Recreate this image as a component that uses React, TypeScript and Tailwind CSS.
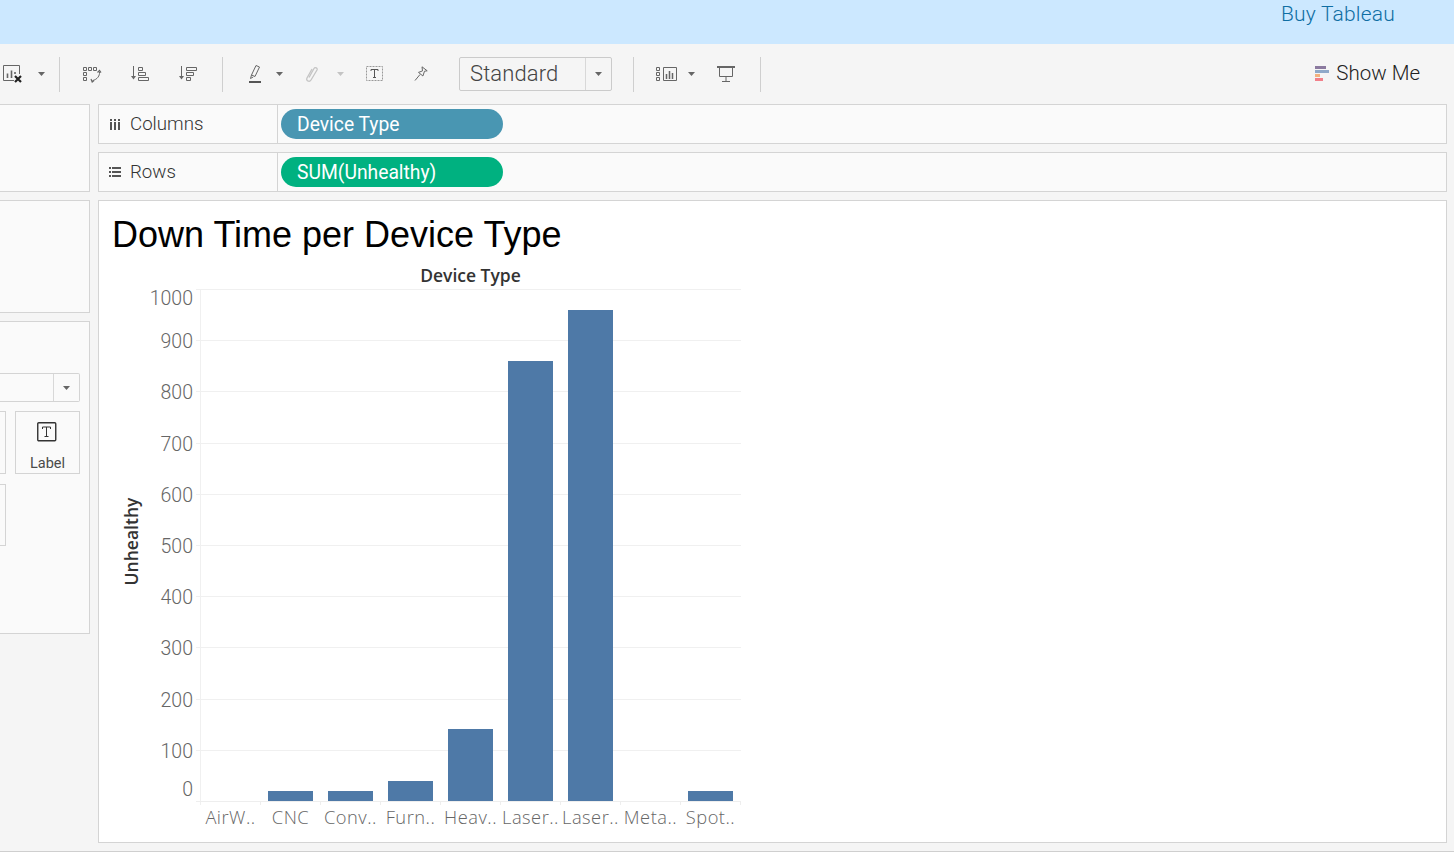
import React from 'react';

const uiFont = 'font-["Roboto","Liberation_Sans",sans-serif]';

const Caret = ({ light, className = '' }: { light?: boolean; className?: string }) => (
  <svg width="7" height="4" viewBox="0 0 7 4" className={className}>
    <path d="M0 0h7L3.5 4z" fill={light ? '#c4c4c4' : '#666'} />
  </svg>
);

const Sep = ({ className = '' }: { className?: string }) => <div className={`h-[35px] w-px bg-[#cfcfcf] ${className}`} />;

const Toolbar = () => (
  <div className="flex h-[60px] items-center bg-[#f5f5f5]">
    <svg width="22" height="20" viewBox="0 0 22 20" className="ml-[2px]" fill="none" stroke="#666">
      <path d="M12 16.500H1.500V1.500h16V10" />
      <path d="M5.500 14V9.500M9.500 14V6.500M13 10V8" strokeWidth="1.600" />
      <path d="M13 12l6 6M19 12l-6 6" stroke="#222" strokeWidth="2.200" />
    </svg>
    <Caret className="ml-[14px]" />
    <Sep className="ml-[14px]" />
    <svg width="20" height="20" viewBox="0 0 20 20" className="ml-[22px]" fill="none" stroke="#666">
      <path d="M1.500 3.500h3v3h-3zM6.500 3.500h3v3h-3zM11.500 3.500h3v3h-3zM1.500 8.500h3v3h-3zM1.500 13.500h3v3h-3z" />
      <path d="M17.500 8c.4 3.800-2.200 7.400-7 8.600" />
      <path d="M15.500 8.500l2-2 1.500 2.200M9 15l1.200 3 1.800-1.500" strokeWidth="1.200" />
    </svg>
    <svg width="20" height="20" viewBox="0 0 20 20" className="ml-[28px]" fill="none" stroke="#666">
      <path d="M3.500 2v11" />
      <path d="M1 12h5l-2.500 3.500z" fill="#666" stroke="none" />
      <path d="M8.500 3.500h4v3h-4zM8.500 8.500h7v3h-7zM8.500 13.500h10v3h-10z" />
    </svg>
    <svg width="20" height="20" viewBox="0 0 20 20" className="ml-[28px]" fill="none" stroke="#666">
      <path d="M3.500 2v11" />
      <path d="M1 12h5l-2.500 3.500z" fill="#666" stroke="none" />
      <path d="M8.500 3.500h10v3h-10zM8.500 8.500h7v3h-7zM8.500 13.500h4v3h-4z" />
    </svg>
    <Sep className="ml-[24px]" />
    <svg width="16" height="20" viewBox="0 0 16 20" className="ml-[24px]" fill="none" stroke="#666">
      <path d="M9 1.500l3.500 1.500-4.500 9.500-3.500-1.500zM4.500 11L3.500 14.500l2.700-1.500" />
      <path d="M2 18h12" stroke="#555" strokeWidth="2" />
    </svg>
    <Caret className="ml-[13px]" />
    <svg width="14" height="18" viewBox="0 0 14 18" className="ml-[22px]" fill="none" stroke="#c4c4c4" strokeWidth="1.300">
      <path d="M4 12.500L9 3.500c1-1.800 4-.4 3 1.500L6 15c-1.500 2.500-5.500.8-4-2l5-9" />
    </svg>
    <Caret light className="ml-[18px]" />
    <svg width="18" height="16" viewBox="0 0 18 16" className="ml-[22px]" fill="none">
      <rect x="0.500" y="0.500" width="16" height="14" stroke="#999" strokeDasharray="2 1" />
      <path d="M5 5V3.500h7V5M8.500 3.500v8M7 11.500h3" stroke="#555" />
    </svg>
    <svg width="14" height="16" viewBox="0 0 14 16" className="ml-[30px]" fill="none" stroke="#666">
      <path d="M8 .8l5.200 4-2.700.4-1.600 4.800-4.400-3.600 4-1.500zM6 8.500L1 14.500" />
    </svg>
    <div className="ml-[31px] flex h-[34px] w-[153px] items-center rounded-[2px] border border-[#cbcbcb]">
      <span className={`flex-1 pl-[10px] text-[22px] font-light leading-none tracking-[0.1px] text-[#444] ${uiFont}`}>Standard</span>
      <div className="flex h-full w-[26px] items-center justify-center border-l border-[#d8d8d8]">
        <Caret />
      </div>
    </div>
    <Sep className="ml-[21px]" />
    <svg width="22" height="16" viewBox="0 0 22 16" className="ml-[22px]" fill="none" stroke="#666">
      <path d="M.5 1.500h3v3h-3zM.5 6.500h3v3h-3zM.5 11.500h3v3h-3zM7.500 1.500h13v13h-13z" />
      <path d="M10.500 13V8M13.500 13V5M16.500 13V7" strokeWidth="1.500" />
    </svg>
    <Caret className="ml-[10px]" />
    <svg width="18" height="18" viewBox="0 0 18 18" className="ml-[22px]" fill="none" stroke="#666">
      <path d="M0 2h18" strokeWidth="2" />
      <path d="M2.500 3v8.500h13V3M9 11.500V16M5 16.500h8" />
    </svg>
    <Sep className="ml-[25px]" />
    <div className="ml-auto mr-[34px] mb-[2px] flex items-center gap-[7px]">
      <div className="flex w-[14px] flex-col gap-px">
        <div className="h-[3px] w-[11px] bg-[#8b7a9f]" />
        <div className="h-[3px] w-[14px] bg-[#8fa9c9]" />
        <div className="h-[3px] w-[5px] bg-[#f2b27f]" />
        <div className="h-[3px] w-[8px] bg-[#f2808a]" />
      </div>
      <span className={`text-[20.500px] font-light leading-none text-[#222] ${uiFont}`}>Show Me</span>
    </div>
  </div>
);

const Shelf = ({ label, pill, color, icon }: { label: string; pill: string; color: string; icon: React.ReactNode }) => (
  <div className="flex h-[40px] border border-[#d4d4d4] bg-[#fafafa]">
    <div className="flex w-[179px] items-center border-r border-[#d4d4d4]">
      <div className="flex w-[31px] justify-center">{icon}</div>
      <span className={`text-[18.700px] font-light text-[#333] ${uiFont}`}>{label}</span>
    </div>
    <div className="flex items-center pl-[3px]">
      <div className={`flex h-[30px] w-[222px] items-center rounded-full pl-[16px] pt-[2px] text-[19.300px] text-white ${uiFont} ${color}`}>
        {pill}
      </div>
    </div>
  </div>
);

const LeftRail = () => (
  <div className="flex w-[90px] flex-col gap-[8px]">
    <div className="h-[88px] border border-l-0 border-[#d4d4d4] bg-[#fafafa]" />
    <div className="h-[113px] border border-l-0 border-[#d4d4d4] bg-[#fafafa]" />
    <div className="flex h-[313px] flex-col border border-l-0 border-[#d4d4d4] bg-[#fafafa] pt-[51px]">
      <div className="mr-[9px] flex h-[29px] justify-end rounded-r-[2px] border border-l-0 border-[#d4d4d4]">
        <div className="flex w-[26px] items-center justify-center border-l border-[#d8d8d8]">
          <Caret />
        </div>
      </div>
      <div className="mt-[9px] flex">
        <div className="h-[63px] w-[6px] border border-l-0 border-[#d4d4d4]" />
        <div className="ml-[9px] flex h-[63px] w-[65px] flex-col items-center border border-[#d4d4d4]">
          <svg width="20" height="20" viewBox="0 0 20 20" className="mt-[10px] -translate-x-px" fill="none" stroke="#333">
            <rect x="0.750" y="0.750" width="18" height="18" rx="1" strokeWidth="1.400" />
            <path d="M5.500 7V5h8v2M9.500 5v9.500M7.500 14.500h4" />
          </svg>
          <span className={`mt-[15px] text-[14.500px] leading-none text-[#4a4a4a] ${uiFont}`}>Label</span>
        </div>
      </div>
      <div className="mt-[10px] h-[62px] w-[6px] border border-l-0 border-[#d4d4d4]" />
    </div>
  </div>
);

const ticks = [
  { label: '1000', y: 298 },
  { label: '900', y: 341 },
  { label: '800', y: 392 },
  { label: '700', y: 444 },
  { label: '600', y: 495 },
  { label: '500', y: 546 },
  { label: '400', y: 597 },
  { label: '300', y: 648 },
  { label: '200', y: 700 },
  { label: '100', y: 751 },
  { label: '0', y: 789 },
];
const gridLines = [289, 340, 391, 443, 494, 545, 596, 647, 699, 750];
const bars = [
  { name: 'AirW..', top: 801 },
  { name: 'CNC', top: 791 },
  { name: 'Conv..', top: 791 },
  { name: 'Furn..', top: 781 },
  { name: 'Heav..', top: 729 },
  { name: 'Laser..', top: 361 },
  { name: 'Laser..', top: 310 },
  { name: 'Meta..', top: 801 },
  { name: 'Spot..', top: 791 },
];

const Chart = () => (
  <svg width="660" height="577" viewBox="99 262 660 577" className="mt-[4px] block" fontFamily="'Open Sans', sans-serif">
    <text x="470.500" y="282" textAnchor="middle" fontSize="17.500" fontWeight="600" fill="#333">Device Type</text>
    <text transform="translate(138 541.500) rotate(-90)" textAnchor="middle" fontSize="17.500" fontWeight="600" fill="#333">Unhealthy</text>
    {gridLines.map(y => (
      <path key={y} d={`M196 ${y + 0.5}H741`} stroke="#f0f0f0" />
    ))}
    <path d="M200.500 289V805" stroke="#f0f0f0" />
    <path d="M196 801.500H741" stroke="#eeeeee" />
    {ticks.map(t => (
      <text key={t.label} x="193" y={t.y + 7} textAnchor="end" fontSize="19.500" fontWeight="300" fill="#666" fontFamily="Roboto, sans-serif">{t.label}</text>
    ))}
    {bars.map((b, i) => (
      <g key={i}>
        <path d={`M${260.500 + i * 60} 801V805`} stroke="#eeeeee" />
        {b.top < 801 && <rect x={208 + i * 60} y={b.top} width="45" height={801 - b.top} fill="#4e79a7" />}
        <text x={230.500 + i * 60} y="824" textAnchor="middle" fontSize="18.300" fontWeight="300" letterSpacing="0.5" fill="#666">{b.name}</text>
      </g>
    ))}
  </svg>
);

export default function App() {
  return (
    <div className="flex h-[852px] w-[1454px] flex-col overflow-hidden bg-[#f5f5f5]">
      <div className="flex h-[44px] justify-end bg-[#cce8ff] pr-[59px]">
        <span className={`text-[21px] font-light leading-[28px] tracking-[0.2px] text-[#0f6ea3] ${uiFont}`}>Buy Tableau</span>
      </div>
      <Toolbar />
      <div className="flex h-[748px] gap-[8px] border-b border-[#cfcfcf] pr-[7px]">
        <LeftRail />
        <div className="flex w-[1349px] flex-col gap-[8px]">
          <Shelf
            label="Columns"
            pill="Device Type"
            color="bg-[#4996b2]"
            icon={
              <svg width="12" height="12" viewBox="0 0 12 12" fill="#555">
                <path d="M1 4h2v8H1zM5 4h2v8H5zM9 4h2v8H9zM1 1h2v2H1zM5 1h2v2H5zM9 1h2v2H9z" />
              </svg>
            }
          />
          <Shelf
            label="Rows"
            pill="SUM(Unhealthy)"
            color="bg-[#00b180]"
            icon={
              <svg width="12" height="12" viewBox="0 0 12 12" fill="#555">
                <path d="M0 1h2v2H0zM0 5h2v2H0zM0 9h2v2H0zM3 1h9v2H3zM3 5h9v2H3zM3 9h9v2H3z" />
              </svg>
            }
          />
          <div className="flex h-[643px] flex-col border border-[#d4d4d4] bg-white">
            <h1 className="pl-[13px] pt-[11px] font-['Liberation_Sans',sans-serif] text-[36px] leading-[46px] text-black">
              Down Time per Device Type
            </h1>
            <Chart />
          </div>
        </div>
      </div>
    </div>
  );
}
